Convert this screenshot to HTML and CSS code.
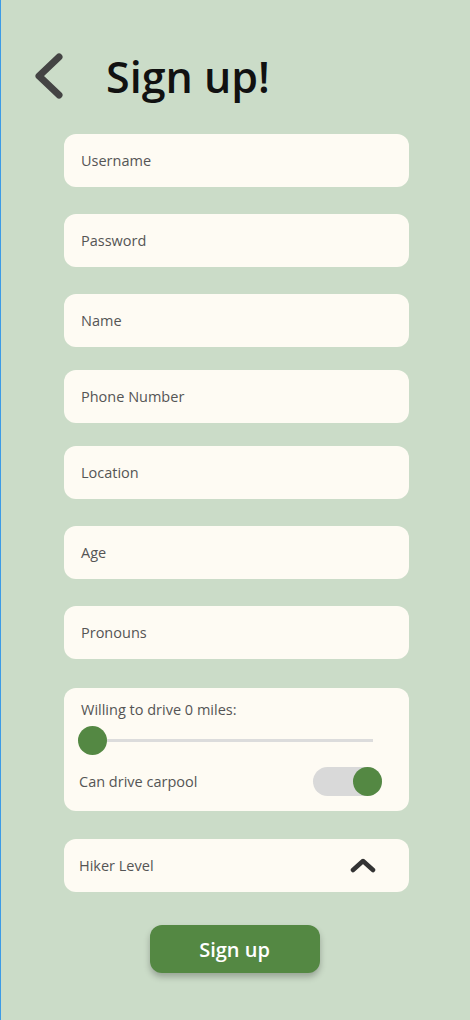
FILE: index.html
```html
<!DOCTYPE html>
<html lang="en">
<head>
  <meta charset="UTF-8">
  <meta name="viewport" content="width=device-width, initial-scale=1.0">
  <title>Sign up</title>
  <link rel="stylesheet" href="styles.css">
</head>
<body>

  <div class="header">
    <a class="back" href="#">
      <svg width="34" height="48" viewBox="0 0 34 48">
        <path d="M26 4 L6 23 L26 42" fill="none" stroke="#444" stroke-width="7" stroke-linecap="round" stroke-linejoin="round"/>
      </svg>
    </a>
    <h1>Sign up!</h1>
  </div>

  <form class="signup" onsubmit="return false">
    <div class="field">Username</div>
    <div class="field">Password</div>
    <div class="field">Name</div>
    <div class="field field-tight">Phone Number</div>
    <div class="field field-tight">Location</div>
    <div class="field">Age</div>
    <div class="field">Pronouns</div>

    <div class="card">
      <div class="card-label">Willing to drive 0 miles:</div>
      <div class="slider">
        <div class="slider-track"></div>
        <div class="slider-thumb"></div>
      </div>
      <div class="toggle-row">
        <span>Can drive carpool</span>
        <div class="toggle"><div class="toggle-thumb"></div></div>
      </div>
    </div>

    <div class="field select">
      <span>Hiker Level</span>
      <svg width="26" height="16" viewBox="0 0 26 16">
        <path d="M3 12 L13 3 L23 12" fill="none" stroke="#333" stroke-width="4.5" stroke-linecap="round" stroke-linejoin="round"/>
      </svg>
    </div>

    <button type="submit" class="submit">Sign up</button>
  </form>

</body>
</html>
```

FILE: styles.css
```css
body {
  font-family: 'Open Sans', 'Noto Sans', sans-serif;
  background-color: #cbdcc8;
  margin: 0;
  min-height: 1020px;
  border-left: 1px solid #3d9be6;
  box-sizing: border-box;
}
.header {
  display: flex;
  align-items: center;
  height: 48px;
  padding-top: 53px;
  padding-left: 32px;
}
.back {
  display: block;
  width: 34px;
  height: 48px;
}
h1 {
  margin: 0 0 0 39px;
  font-size: 43px;
  font-weight: 600;
  color: #111;
  line-height: 48px;
}
.signup {
  display: flex;
  flex-direction: column;
  margin: 33px 0 0 63px;
  width: 345px;
}
.field {
  height: 53px;
  background-color: #fefbf3;
  border-radius: 12px;
  display: flex;
  align-items: center;
  padding-left: 17px;
  font-size: 14.5px;
  color: #555;
  margin-bottom: 27px;
}
.field-tight {
  margin-top: -4px;
}
.card {
  background-color: #fefbf3;
  border-radius: 12px;
  padding: 12px 26px 15px 14px;
  margin-top: 2px;
  margin-bottom: 28px;
  font-size: 14.5px;
  color: #555;
}
.card-label {
  padding-left: 3px;
  line-height: 20px;
}
.slider {
  position: relative;
  height: 30px;
  margin-top: 5px;
}
.slider-track {
  position: absolute;
  left: 14px;
  right: 10px;
  top: 14px;
  height: 3px;
  background-color: #dcdcdc;
}
.slider-thumb {
  position: absolute;
  left: 0;
  top: 1px;
  width: 29px;
  height: 29px;
  border-radius: 50%;
  background-color: #548843;
}
.toggle-row {
  display: flex;
  justify-content: space-between;
  align-items: center;
  margin-top: 12px;
  padding-left: 1px;
}
.toggle {
  width: 69px;
  height: 29px;
  border-radius: 15px;
  background-color: #d9d9d9;
  display: flex;
  justify-content: flex-end;
  margin-right: 1px;
}
.toggle-thumb {
  width: 29px;
  height: 29px;
  border-radius: 50%;
  background-color: #548843;
}
.select {
  justify-content: space-between;
  padding-left: 15px;
  padding-right: 33px;
  margin-bottom: 33px;
}
.submit {
  align-self: center;
  margin-right: 4px;
  width: 170px;
  height: 48px;
  border: none;
  border-radius: 12px;
  background-color: #548843;
  color: #fff;
  font-family: 'Open Sans', 'Noto Sans', sans-serif;
  font-size: 20px;
  font-weight: 600;
  box-shadow: 0 4px 6px rgba(0, 0, 0, 0.25);
  cursor: pointer;
}
```
